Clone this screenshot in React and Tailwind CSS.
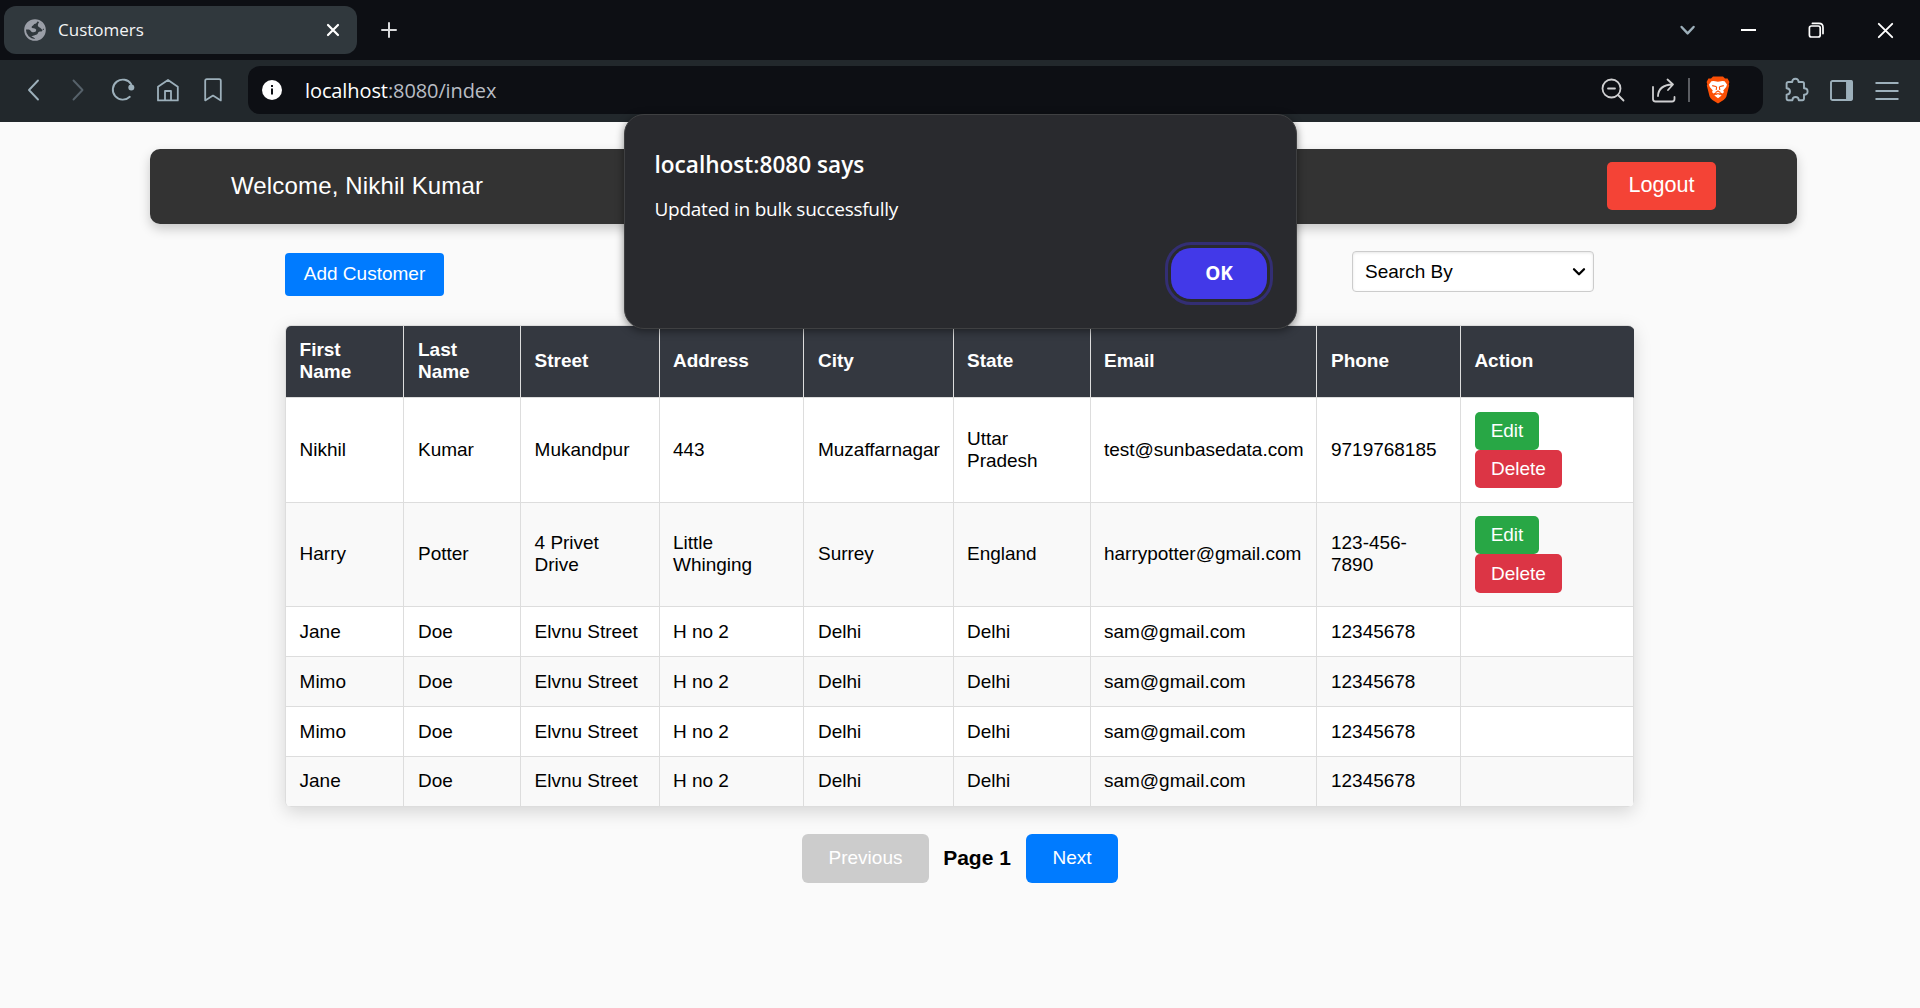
import React from "react";

const COLUMNS = ["First Name", "Last Name", "Street", "Address", "City", "State", "Email", "Phone", "Action"];

const CELL_PADDING = ["pl-[13.6px]", "pl-[14px]", "pl-[13.6px]", "pl-[13px]", "pl-[14px]", "pl-[13px]", "pl-[13px]", "pl-[14px]", "pl-[13.4px]"];

const CUSTOMERS = [
  { cells: ["Nikhil", "Kumar", "Mukandpur", "443", "Muzaffarnagar", "Uttar Pradesh", "test@sunbasedata.com", "9719768185"], height: "h-[105px]", actions: true, deleteHeight: "h-[38px]" },
  { cells: ["Harry", "Potter", "4 Privet Drive", "Little Whinging", "Surrey", "England", "harrypotter@gmail.com", "123-456-7890"], height: "h-[104px]", lift: "pb-0.5", actions: true, deleteHeight: "h-[39px]" },
  { cells: ["Jane", "Doe", "Elvnu Street", "H no 2", "Delhi", "Delhi", "sam@gmail.com", "12345678"], height: "h-[50px]" },
  { cells: ["Mimo", "Doe", "Elvnu Street", "H no 2", "Delhi", "Delhi", "sam@gmail.com", "12345678"], height: "h-[50px]" },
  { cells: ["Mimo", "Doe", "Elvnu Street", "H no 2", "Delhi", "Delhi", "sam@gmail.com", "12345678"], height: "h-[50px]" },
  { cells: ["Jane", "Doe", "Elvnu Street", "H no 2", "Delhi", "Delhi", "sam@gmail.com", "12345678"], height: "h-[50px]", lift: "pb-0.5" },
];

const GRID = "grid grid-cols-[118px_117px_139px_144px_150px_137px_226px_144px_173px]";

function Icon({ w = 24, h = 24, className = "", sw = 1.6, children }) {
  return (
    <svg
      width={w}
      height={h}
      viewBox={`0 0 ${w} ${h}`}
      fill="none"
      stroke="currentColor"
      strokeWidth={sw}
      strokeLinecap="round"
      strokeLinejoin="round"
      className={`block shrink-0 ${className}`}
    >
      {children}
    </svg>
  );
}

function TabStrip() {
  return (
    <div className="flex h-[60px] items-center bg-[#0d0f14] pl-1">
      <div className="flex h-12 w-[353px] items-center rounded-xl bg-[#30383d] pl-5 pr-[17px]">
        <Icon w={22} h={22} sw={1.8} className="text-[#9b9fa8]">
          <circle cx="11" cy="11" r="9.9" />
          <path d="M1.6 10.6 C1.6 5 6 1.2 11.4 1.4 L13.4 2 C13 4 12 4.8 10.2 5 C9.6 6.8 7.6 6.6 7.6 8.4 C7.8 9.6 11.6 8.6 12.2 10.8 C12.4 12.8 10.6 13.4 8.6 13.2 C6.6 13 6.6 10.8 4.8 10.6 Z" fill="currentColor" stroke="none" />
          <path d="M15.6 2.6 C13.2 5.4 13.4 7.8 15.6 8.4 C17.4 9 17.2 11.2 20.6 11 C20.4 16.4 16.6 20 11.6 20.6 C10.4 19.4 9.8 18 7.2 17.6 C9.2 15.8 13.6 16.6 14.2 13.4 C15 12.4 16.4 12.4 17.6 12.6 L20.8 8 Z" fill="currentColor" stroke="none" />
        </Icon>
        <span className="ml-3 text-[17px] leading-6 text-[#f3f4f5]">Customers</span>
        <Icon w={14} h={14} sw={2.2} className="ml-auto text-white">
          <path d="M2 2 L12 12 M12 2 L2 12" />
        </Icon>
      </div>
      <Icon w={18} h={18} sw={2} className="ml-[23px] text-[#d9dadc]">
        <path d="M9 2 V16 M2 9 H16" />
      </Icon>
      <div className="ml-auto flex items-center text-white">
        <Icon w={18} h={12} sw={2.4} className="mr-[44px] text-[#9db0bb]">
          <path d="M2.6 3 L8.6 9.4 L14.6 3" />
        </Icon>
        <span className="mr-[52px] h-[2px] w-[15px] bg-white" />
        <Icon w={16} h={16} sw={1.7} className="mr-[53px]">
          <rect x="1.4" y="4" width="10.8" height="11" rx="2" />
          <path d="M4.4 1.4 H11 Q15 1.4 15 5.4 V11.6" />
        </Icon>
        <Icon w={17} h={17} sw={1.9} className="mr-[26px]">
          <path d="M1.8 1.8 L15.2 15.2 M15.2 1.8 L1.8 15.2" />
        </Icon>
      </div>
    </div>
  );
}

function BraveLion() {
  return (
    <svg width="24" height="28" viewBox="0 0 24 28" className="block shrink-0">
      <path d="M7 .6 H17 L19 2.6 L21.6 2.6 L23.4 6 L22.7 8.2 L23.2 9.6 L20.4 20.6 Q19.7 22.6 17.6 24 L12 27.6 L6.4 24 Q4.3 22.6 3.6 20.6 L.8 9.6 L1.3 8.2 L.6 6 L2.4 2.6 L5 2.6 Z" fill="#fb4f05" />
      <path d="M7.6 5 L12 5.8 L16.4 5 L18.6 5.2 L21 8.6 L20.2 11 L17.2 14.4 L18 16 L16.6 17.6 L14.4 16.6 L13.2 17.6 L15.6 19.6 L12 22.2 L8.4 19.6 L10.8 17.6 L9.6 16.6 L7.4 17.6 L6 16 L6.8 14.4 L3.8 11 L3 8.6 L5.4 5.2 Z" fill="#fff" />
      <path d="M6.2 9.6 L9.8 10.4 L10.6 11.2 L10.2 14 M17.8 9.6 L14.2 10.4 L13.4 11.2 L13.8 14 M9.6 16.4 L12 15 L14.4 16.4 M9.4 18.8 L12 17.6 L14.6 18.8" fill="none" stroke="#fb4f05" strokeWidth="1.1" />
    </svg>
  );
}

function Toolbar() {
  return (
    <div className="flex h-[62px] items-center bg-[#22282c] pb-0.5 text-[#9db0bb]">
      <Icon w={14} h={24} className="ml-[26px]" sw={1.9}>
        <path d="M12 2.5 L3 12 L12 21.5" />
      </Icon>
      <Icon w={14} h={24} className="ml-[31px] text-[#56616a]" sw={1.9}>
        <path d="M2.5 2.5 L11.5 12 L2.5 21.5" />
      </Icon>
      <Icon w={26} h={24} className="ml-[26px]" sw={1.9}>
        <path d="M20.2 6.2 A10 10 0 1 0 18.8 18.8" />
        <circle cx="20.3" cy="9.4" r="3" fill="currentColor" stroke="none" />
      </Icon>
      <Icon w={24} h={24} className="ml-[19px]" sw={1.8}>
        <path d="M2 22.4 V8.8 L12 2 L21.8 8.8 V22.4 Z M9 22 V13 H15 V22" />
      </Icon>
      <Icon w={18} h={24} className="ml-[24px]" sw={1.8}>
        <path d="M1.2 22.4 V2.8 Q1.2 1.2 2.8 1.2 H15.2 Q16.8 1.2 16.8 2.8 V22.4 L9 17.6 Z" />
      </Icon>
      <div className="ml-[26px] flex h-12 w-[1515px] items-center rounded-xl bg-[#0d0f14] pl-[14px]">
        <svg width="20" height="20" viewBox="0 0 20 20" className="block shrink-0">
          <circle cx="10" cy="10" r="10" fill="#fff" />
          <path d="M10 8.6 V14.6" stroke="#0d0f14" strokeWidth="2" />
          <rect x="9" y="5" width="2" height="2" fill="#0d0f14" />
        </svg>
        <span className="ml-[23px] pt-0.5 text-[20px] leading-7 tracking-[-0.1px] text-[#b9bdc4]">
          <span className="text-white">localhost</span>:8080/index
        </span>
        <div className="ml-auto flex items-center text-[#cfcfd1]">
          <Icon w={24} h={24} sw={1.8}>
            <circle cx="10.5" cy="10.5" r="9" />
            <path d="M7 10.5 H14 M17 17 L22.5 22.5" />
          </Icon>
          <Icon w={25} h={25} sw={1.8} className="ml-[26px]">
            <path d="M2 9 V21 Q2 23.5 4.5 23.5 H21 Q23.5 23.5 23.5 21 V19" />
            <path d="M7 18 Q7.5 7 21.5 6.5 M16.5 1.5 L22 6.5 L17 12" />
          </Icon>
          <span className="ml-[12px] h-6 w-[2px] bg-[#5c5e63]" />
          <div className="ml-[16px] mr-[33px]">
            <BraveLion />
          </div>
        </div>
      </div>
      <Icon w={26} h={26} sw={1.9} className="ml-[21px]">
        <path d="M4.5 5 H8.2 Q8.2 1.8 11.4 1.8 Q14.6 1.8 14.6 5 H18.4 Q20 5 20 6.6 V11.2 Q23.6 11.2 23.6 14.4 Q23.6 17.6 20 17.6 V21.6 Q20 23.2 18.4 23.2 H14.8 Q14.6 20 11.6 20 Q8.6 20 8.4 23.2 H4.2 Q2.6 23.2 2.6 21.6 V17.6 Q6 17.4 6 14.4 Q6 11.4 2.6 11.2 V6.6 Q2.6 5 4.5 5 Z" />
      </Icon>
      <Icon w={23} h={21} sw={1.9} className="ml-[20px]">
        <rect x="1" y="1" width="21" height="19" rx="1.5" />
        <path d="M17 1 H20.5 Q22 1 22 2.5 V18.5 Q22 20 20.5 20 H17 Z" fill="currentColor" />
      </Icon>
      <Icon w={24} h={20} sw={1.9} className="ml-[22px] mt-0.5">
        <path d="M1.2 2 H22.8 M1.2 10 H22.8 M1.2 18 H22.8" />
      </Icon>
    </div>
  );
}

function AlertDialog() {
  return (
    <div className="absolute left-[624px] top-[114px] flex h-[215px] w-[673px] flex-col rounded-[20px] border border-[#3f4042] bg-[#292a2e] pl-[29.5px] pr-[29px] pt-[34px] shadow-[0_2px_8px_rgba(0,0,0,0.45)]">
      <h1 className="text-[22.6px] font-semibold leading-8 text-white">localhost:8080 says</h1>
      <p className="mt-[14px] text-[19px] leading-7 tracking-[-0.26px] text-white">Updated in bulk successfully</p>
      <button className="mt-[25px] h-[51px] w-24 self-end rounded-[20px] bg-[#4239e8] text-[19px] font-bold text-white outline-[3px] outline-offset-[3px] outline-[#332e74] outline-solid">
        OK
      </button>
    </div>
  );
}

function CustomerTable() {
  return (
    <div className="ml-[285px] w-[1349px] overflow-clip rounded-[6px] border-l border-t border-[#ddd] bg-white text-[19px] leading-[22px] tracking-[-0.02px] shadow-[0_5px_18px_rgba(0,0,0,0.15)]">
      <div className={`${GRID} h-[72px] bg-[#343840] font-bold text-white`}>
        {COLUMNS.map((c, j) => (
          <div key={c} className={`flex items-center border-b border-r border-[#ddd] pb-px pr-3 last:border-r-[#343840] ${CELL_PADDING[j]}`}>
            {c}
          </div>
        ))}
      </div>
      {CUSTOMERS.map((row, i) => (
        <div key={i} className={`${GRID} ${row.height} ${i % 2 ? "bg-[#f9f9f9]" : "bg-white"}`}>
          {row.cells.map((cell, j) => (
            <div key={j} className={`flex items-center border-b border-r border-[#ddd] pr-3 ${CELL_PADDING[j]} ${row.lift || ""}`}>
              {cell}
            </div>
          ))}
          <div className="flex flex-col items-start justify-center border-b border-r border-[#ddd] pl-[14px] text-white">
            {row.actions && (
              <>
                <button className="h-[38px] w-16 rounded-[5px] bg-[#28a745]">Edit</button>
                <button className={`w-[87px] rounded-[5px] bg-[#dc3545] ${row.deleteHeight}`}>Delete</button>
              </>
            )}
          </div>
        </div>
      ))}
    </div>
  );
}

export default function App() {
  return (
    <div className="relative h-[1008px] w-[1920px] overflow-hidden bg-[#fafafa] font-['Liberation_Sans',Arial,sans-serif] text-black">
      <div className="font-['Open_Sans','Noto_Sans',sans-serif]">
        <TabStrip />
        <Toolbar />
      </div>

      <header className="ml-[150px] mt-[27px] flex h-[75px] w-[1647px] items-center justify-between rounded-[10px] bg-[#333] pl-[81px] pr-[81px] shadow-[0_5px_12px_rgba(0,0,0,0.2)]">
        <span className="pb-0.5 text-[24px] leading-7 tracking-[0.15px] text-white">Welcome, Nikhil Kumar</span>
        <button className="mb-[2px] h-12 w-[109px] rounded-[5px] bg-[#f44336] text-[21.6px] text-white">Logout</button>
      </header>

      <div className="mt-[27px] flex h-[74px] items-start pl-[285px] pr-[326px]">
        <button className="mt-[2px] h-[43px] w-[159px] rounded-[4px] bg-[#007bff] text-[19px] text-white">Add Customer</button>
        <div className="ml-auto flex h-[41px] w-[242px] items-center justify-between rounded-[4px] border border-[#ccc] bg-white pl-3 pr-[7px] pt-px text-[19px] shadow-[inset_0_1px_3px_rgba(0,0,0,0.1)]">
          <span>Search By</span>
          <Icon w={14} h={10} sw={2.3}>
            <path d="M2 2.3 L7 7.3 L12 2.3" />
          </Icon>
        </div>
      </div>

      <CustomerTable />

      <div className="mt-[27px] flex items-center pl-[802px] text-[19px]">
        <button className="h-[49px] w-[127px] rounded-[6px] bg-[#ccc] text-white">Previous</button>
        <span className="w-[97px] pb-0.5 pr-px text-center text-[21px] font-bold">Page 1</span>
        <button className="h-[49px] w-[92px] rounded-[6px] bg-[#007bff] text-white">Next</button>
      </div>

      <div className="font-['Open_Sans','Noto_Sans',sans-serif]">
        <AlertDialog />
      </div>
    </div>
  );
}
